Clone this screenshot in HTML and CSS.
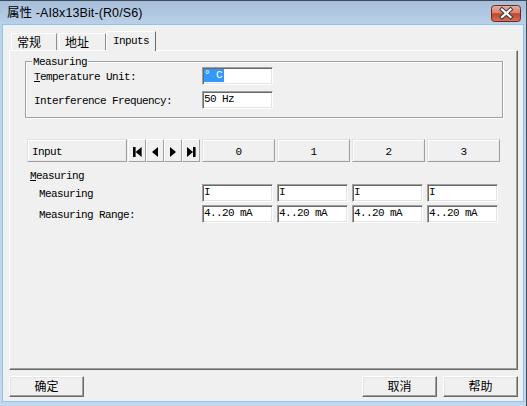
FILE: index.html
```html
<!DOCTYPE html>
<html>
<head>
<meta charset="utf-8">
<title>属性</title>
<link rel="stylesheet" href="styles.css">
</head>
<body>
<div class="window">
  <div class="titlebar">
    <span class="title">属性 -AI8x13Bit-(R0/S6)</span>
    <svg class="close" width="30" height="17" viewBox="0 0 30 17">
      <defs>
        <linearGradient id="cg" x1="0" y1="0" x2="0" y2="1">
          <stop offset="0" stop-color="#eab0a2"/>
          <stop offset="0.45" stop-color="#d7826d"/>
          <stop offset="0.52" stop-color="#c0432c"/>
          <stop offset="1" stop-color="#d8735a"/>
        </linearGradient>
      </defs>
      <rect x="0.5" y="0.5" width="29" height="16" rx="3" fill="url(#cg)" stroke="#6e2a22"/>
      <path d="M11 4.5 L19.5 12 M19.5 4.5 L11 12" stroke="#3c3c3c" stroke-width="4.2" stroke-linecap="square"/>
      <path d="M11 4.5 L19.5 12 M19.5 4.5 L11 12" stroke="#ffffff" stroke-width="2.2" stroke-linecap="square"/>
    </svg>
  </div>
  <div class="client">
    <div class="tabs">
      <div class="tab cjk first">常规</div>
      <div class="tab cjk second">地址</div>
      <div class="tab active">Inputs</div>
    </div>
    <div class="panel">
      <div class="group">
        <div class="legend">Measuring</div>
        <div class="frow">
          <span class="flabel"><u>T</u>emperature Unit:</span>
          <div class="edit"><span class="sel">°&nbsp;C</span></div>
        </div>
        <div class="frow second-row">
          <span class="flabel">Interference Frequency:</span>
          <div class="edit">50 Hz</div>
        </div>
      </div>
      <div class="table">
        <div class="hdr">
          <div class="hbtn inputbtn">Input</div>
          <div class="nav">
            <div class="navbtn"><svg width="9" height="10" viewBox="0 0 9 10"><rect x="0" y="0" width="2.6" height="10" fill="#000"/><polygon points="8.6,0 2.6,5 8.6,10" fill="#000"/></svg></div>
            <div class="navbtn"><svg width="6" height="10" viewBox="0 0 6 10"><polygon points="6,0 0,5 6,10" fill="#000"/></svg></div>
            <div class="navbtn"><svg width="6" height="10" viewBox="0 0 6 10"><polygon points="0,0 6,5 0,10" fill="#000"/></svg></div>
            <div class="navbtn"><svg width="9" height="10" viewBox="0 0 9 10"><polygon points="0,0 6,5 0,10" fill="#000"/><rect x="6" y="0" width="2.6" height="10" fill="#000"/></svg></div>
          </div>
          <div class="cols">
            <div class="hbtn col">0</div>
            <div class="hbtn col">1</div>
            <div class="hbtn col">2</div>
            <div class="hbtn col">3</div>
          </div>
        </div>
        <div class="section"><u>M</u>easuring</div>
        <div class="trow">
          <span class="tlabel">Measuring</span>
          <div class="edits">
            <div class="edit">I</div>
            <div class="edit">I</div>
            <div class="edit">I</div>
            <div class="edit">I</div>
          </div>
        </div>
        <div class="trow second-trow">
          <span class="tlabel">Measuring Range:</span>
          <div class="edits">
            <div class="edit">4..20 mA</div>
            <div class="edit">4..20 mA</div>
            <div class="edit">4..20 mA</div>
            <div class="edit">4..20 mA</div>
          </div>
        </div>
      </div>
    </div>
    <div class="buttons">
      <div class="btn">确定</div>
      <div class="spacer"></div>
      <div class="btn">取消</div>
      <div class="btn">帮助</div>
    </div>
  </div>
</div>
</body>
</html>
```

FILE: styles.css
```css
* {
  box-sizing: border-box;
}

html, body {
  margin: 0;
  padding: 0;
}

body {
  width: 527px;
  height: 406px;
  overflow: hidden;
  background: #c0d6ed;
  font-family: "Liberation Mono", monospace;
  font-size: 11px;
  letter-spacing: -0.6px;
  color: #000;
}

.window {
  width: 527px;
  height: 406px;
  display: flex;
  flex-direction: column;
  background: linear-gradient(#a6bed9 0px, #bcd2ea 25px, #c3d8ee 100%);
  border-top: 1px solid #3f4b58;
  border-right: 1px solid #3f4b58;
}

.titlebar {
  height: 24px;
  flex: none;
  display: flex;
  align-items: center;
  justify-content: space-between;
  padding: 0 5px 0 7px;
}

.title {
  font-family: "Liberation Sans", "Noto Sans CJK SC", sans-serif;
  font-size: 12.5px;
  letter-spacing: 0.1px;
  color: #000;
  line-height: 16px;
}

.close {
  display: block;
}

.client {
  flex: 1;
  margin: 0 3px 5px 3px;
  background: #f0f0f0;
  display: flex;
  flex-direction: column;
  box-shadow: 0 0 0 1px #8cc4ec;
}

/* Tabs */
.tabs {
  display: flex;
  height: 19px;
  margin-top: 6px;
  padding-left: 8px;
  flex: none;
}

.tab {
  height: 17px;
  margin-top: 2px;
  width: 46px;
  padding-left: 5px;
  border-top: 1px solid #fff;
  border-left: 1px solid #fff;
  border-right: 1px solid #8c8c8c;
  line-height: 15px;
  background: #f0f0f0;
}

.tab.first {
  margin-right: 2px;
}

.tab.second {
  width: 47px;
}

.cjk {
  font-family: "Noto Sans CJK SC", sans-serif;
  font-size: 12px;
  letter-spacing: 0;
}

.tab.active {
  position: relative;
  z-index: 1;
  width: 50px;
  height: 20px;
  margin-top: 0;
  margin-bottom: -1px;
  border-right: 1px solid #696969;
  line-height: 16px;
  padding-top: 1px;
  padding-left: 6px;
}

/* Panel */
.panel {
  flex: none;
  margin-left: 6px;
  width: 509px;
  height: 320px;
  border-top: 1px solid #fff;
  border-left: 1px solid #fff;
  border-right: 1px solid #696969;
  border-bottom: 1px solid #696969;
  box-shadow: inset -1px -1px 0 #a0a0a0;
}

.group {
  margin: 10px 0 0 15px;
  width: 478px;
  height: 57px;
  border: 1px solid #a0a0a0;
  box-shadow: inset 1px 1px 0 #fff, 1px 1px 0 #fff;
  padding-left: 8px;
}

.legend {
  width: fit-content;
  height: 12px;
  line-height: 12px;
  margin: -6px 0 -1px -2px;
  padding: 0 1px;
  background: #f0f0f0;
}

.frow {
  display: flex;
  align-items: center;
  height: 18px;
}

.frow.second-row {
  margin-top: 6px;
}

.flabel {
  width: 168px;
  flex: none;
  padding-top: 1px;
}

.edit {
  width: 71px;
  height: 18px;
  flex: none;
  background: #fff;
  border: 1px solid;
  border-color: #a0a0a0 #fff #fff #a0a0a0;
  box-shadow: inset 1px 1px 0 #696969, inset -1px -1px 0 #e3e3e3;
  padding-left: 1px;
  line-height: 15px;
  white-space: nowrap;
  overflow: hidden;
}

.sel {
  display: inline-block;
  margin-top: 1px;
  height: 13px;
  line-height: 13px;
  background: #3399ff;
  color: #fff;
  padding-right: 2px;
  vertical-align: top;
}

/* Table */
.table {
  margin: 21px 0 0 17px;
}

.hdr {
  display: flex;
  height: 23px;
}

.hbtn {
  height: 23px;
  background: #f0f0f0;
  border: 1px solid;
  border-color: #e3e3e3 #a0a0a0 #a0a0a0 #e3e3e3;
  box-shadow: inset 1px 1px 0 #fff, inset -1px -1px 0 #e8e8e8;
  display: flex;
  align-items: center;
  padding-top: 2px;
}

.inputbtn {
  width: 100px;
  padding-left: 4px;
  margin-right: 1px;
}

.nav {
  display: flex;
  margin-right: 2px;
}

.navbtn {
  width: 18px;
  height: 23px;
  border: 1px solid;
  border-color: #fff #a0a0a0 #a0a0a0 #fff;
  background: #f0f0f0;
  display: flex;
  align-items: center;
  justify-content: center;
  padding-top: 2px;
}

.cols {
  display: flex;
  gap: 2px;
}

.col {
  width: 73px;
  justify-content: center;
}

.section {
  margin-top: 8px;
  height: 12px;
  line-height: 12px;
  padding-left: 3px;
}

.trow {
  display: flex;
  align-items: center;
  height: 18px;
  margin-top: 2px;
}

.trow.second-trow {
  margin-top: 3px;
}

.tlabel {
  width: 175px;
  flex: none;
  padding-left: 12px;
  padding-top: 1px;
}

.edits {
  display: flex;
  gap: 4px;
}

/* Bottom buttons */
.buttons {
  display: flex;
  margin-top: 6px;
  height: 21px;
  padding: 0 5px 0 6px;
  gap: 6px;
}

.spacer {
  flex: 1;
}

.btn {
  width: 75px;
  height: 21px;
  font-family: "Noto Sans CJK SC", sans-serif;
  font-size: 12px;
  letter-spacing: 0;
  text-align: center;
  line-height: 18px;
  background: #f0f0f0;
  border: 1px solid;
  border-color: #fff #696969 #696969 #fff;
  box-shadow: inset -1px -1px 0 #a0a0a0, inset 1px 1px 0 #e3e3e3;
}
```
